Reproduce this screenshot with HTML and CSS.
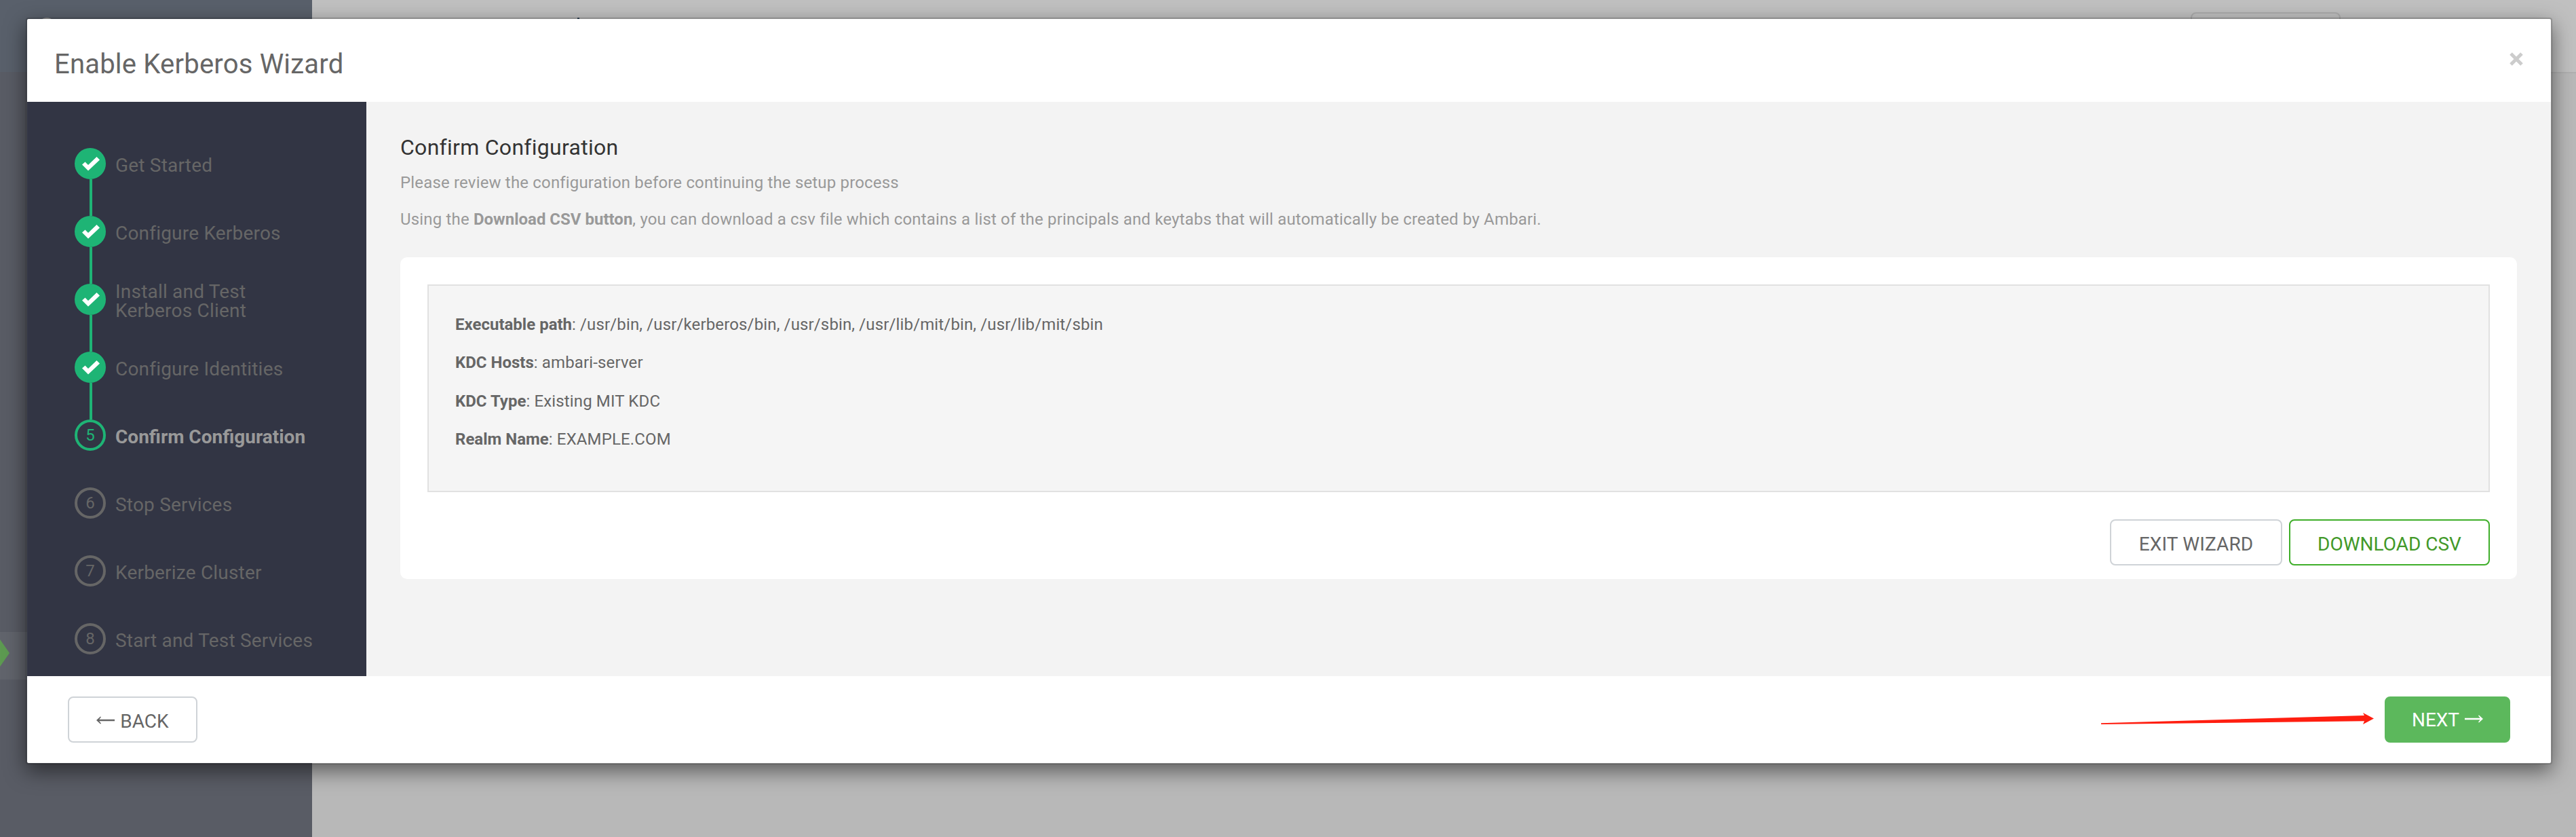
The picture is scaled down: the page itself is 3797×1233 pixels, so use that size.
FILE: index.html
```html
<!DOCTYPE html>
<html lang="en">
<head>
<meta charset="utf-8">
<title>Enable Kerberos Wizard</title>
<link rel="stylesheet" href="styles.css">
</head>
<body>
<div class="app">
  <aside class="app-nav">
    <div class="app-brand"><span class="app-logo"></span></div>
    <div class="app-nav-active"><span class="app-marker"></span></div>
  </aside>
  <main class="app-main">
    <div class="app-bar"><span class="app-crumb"></span><span class="app-bar-button"></span></div>
  </main>
</div>
<section class="modal">
  <header class="modal-header">
    <h1 class="modal-title">Enable Kerberos Wizard</h1>
    <button class="close" aria-label="Close"><svg width="20" height="20" viewBox="0 0 20 20"><path d="M2 2 18 18M18 2 2 18" stroke="#ccc" stroke-width="5"/></svg></button>
  </header>
  <div class="modal-body">
    <ol class="steps">
      <li class="step done"><span class="dot"><svg class="check" viewBox="0 0 26 20"><path d="M0 11.5 4.5 7.5 9 12 21.5 0 26 4.5 9 20.5Z"/></svg></span><span class="label">Get Started</span></li>
      <li class="step done"><span class="dot"><svg class="check" viewBox="0 0 26 20"><path d="M0 11.5 4.5 7.5 9 12 21.5 0 26 4.5 9 20.5Z"/></svg></span><span class="label">Configure Kerberos</span></li>
      <li class="step done"><span class="dot"><svg class="check" viewBox="0 0 26 20"><path d="M0 11.5 4.5 7.5 9 12 21.5 0 26 4.5 9 20.5Z"/></svg></span><span class="label two-line">Install and Test Kerberos Client</span></li>
      <li class="step done"><span class="dot"><svg class="check" viewBox="0 0 26 20"><path d="M0 11.5 4.5 7.5 9 12 21.5 0 26 4.5 9 20.5Z"/></svg></span><span class="label">Configure Identities</span></li>
      <li class="step active"><span class="dot">5</span><span class="label">Confirm Configuration</span></li>
      <li class="step"><span class="dot">6</span><span class="label">Stop Services</span></li>
      <li class="step"><span class="dot">7</span><span class="label">Kerberize Cluster</span></li>
      <li class="step"><span class="dot">8</span><span class="label">Start and Test Services</span></li>
    </ol>
    <div class="content">
      <h2 class="heading">Confirm Configuration</h2>
      <p class="intro">Please review the configuration before continuing the setup process</p>
      <p class="intro">Using the <b>Download CSV button</b>, you can download a csv file which contains a list of the principals and keytabs that will automatically be created by Ambari.</p>
      <div class="card">
        <div class="well">
          <p><b>Executable path</b>: /usr/bin, /usr/kerberos/bin, /usr/sbin, /usr/lib/mit/bin, /usr/lib/mit/sbin</p>
          <p><b>KDC Hosts</b>: ambari-server</p>
          <p><b>KDC Type</b>: Existing MIT KDC</p>
          <p><b>Realm Name</b>: EXAMPLE.COM</p>
        </div>
        <div class="actions">
          <button class="btn exit">EXIT WIZARD</button>
          <button class="btn download">DOWNLOAD CSV</button>
        </div>
      </div>
    </div>
  </div>
  <footer class="modal-footer">
    <button class="btn back"><svg class="arrow" width="27" height="12" viewBox="0 0 27 12"><path d="M0 6 6 0.5 7 1.2 4.3 4.7H27V7.3H4.3L7 10.8 6 11.5Z"/></svg>BACK</button>
    <button class="btn next">NEXT<svg class="arrow" width="27" height="12" viewBox="0 0 27 12"><path d="M27 6 21 0.5 20 1.2 22.7 4.7H0V7.3H22.7L20 10.8 21 11.5Z"/></svg></button>
  </footer>
</section>
<svg class="pointer" width="404" height="20" viewBox="0 0 404 20"><path d="M0 15.3 388 4 386 0 402 8.5 386 17 388 12.3 0 17Z"/></svg>
</body>
</html>
```

FILE: styles.css
```css
* { box-sizing: border-box; }
html, body { margin: 0; height: 1233px; overflow: hidden; }
body { position: relative; font-family: Roboto, sans-serif; font-size: 24px; color: #666; background: #b8b8b8; }
h1, h2, p, ol { margin: 0; padding: 0; font-weight: 400; }
b { letter-spacing: 0; }

/* Dimmed application behind the dialog */
.app { display: flex; height: 1233px; }
.app-nav { width: 460px; background: #595c65; }
.app-brand { height: 106px; padding: 26px 0 0 56px; background: #59606b; }
.app-logo { display: block; width: 26px; height: 26px; border-radius: 50%; background: #a0a0a0; }
.app-nav-active { height: 70px; margin-top: 825px; padding-top: 11px; background: #61646c; }
.app-marker { display: block; width: 14px; height: 40px; background: #5d9a51; clip-path: polygon(0 0, 100% 50%, 0 100%); }
.app-main { flex: 1; }
.app-bar { display: flex; justify-content: space-between; height: 108px; padding: 18px 347px 0 391px; background: #c0c0c0; border-bottom: 2px solid #b0b0b0; }
.app-crumb { width: 3px; height: 12px; margin-top: 8px; background: #34495e; }
.app-bar-button { width: 221px; height: 68px; border: 2px solid #acacac; border-radius: 8px; }

/* Dialog */
.modal { position: absolute; left: 38px; top: 26px; display: flex; flex-direction: column; width: 3724px; height: 1100px; border: 2px solid rgba(0,0,0,.2); border-radius: 4px; background: #fff; background-clip: padding-box; box-shadow: 0 10px 30px rgba(0,0,0,.5); }
.modal-header { display: flex; justify-content: space-between; height: 122px; padding: 43px 41px 0 40px; }
.modal-title { font-size: 40px; line-height: 48px; letter-spacing: .2px; }
.close { width: 20px; height: 20px; margin-top: 6px; padding: 0; border: 0; background: none; }
.close svg { display: block; }
.modal-body { display: flex; height: 846px; }
.modal-footer { display: flex; flex: 1; justify-content: space-between; align-items: flex-start; padding: 30px 60px 0; }

/* Step list */
.steps { width: 500px; padding: 68px 0 0 70px; list-style: none; background: #323544; }
.step { display: flex; height: 100px; font-size: 28px; line-height: 28px; }
.dot { display: flex; flex: none; align-items: center; justify-content: center; width: 46px; height: 46px; border: 4px solid #666; border-radius: 50%; font-size: 24px; }
.label { width: 310px; margin: 12px 0 0 14px; letter-spacing: .2px; }
.two-line { width: 220px; margin-top: -2px; }
.check { display: block; width: 26px; height: 20px; margin-left: 2px; overflow: visible; fill: #fff; }
.done { background: linear-gradient(#1eb475, #1eb475) 22px 46px / 4px 54px no-repeat; }
.done .dot { border-color: #1eb475; background: #1eb475; }
.active .dot { border-color: #1eb475; color: #1eb475; }
.active .label { color: #999; font-weight: 700; letter-spacing: 0; }

/* Step content */
.content { flex: 1; padding: 46px 50px 0; background: #f3f3f3; }
.heading { margin-bottom: 14px; font-size: 32px; line-height: 42px; letter-spacing: .28px; color: #333; }
.intro { height: 54px; line-height: 34px; letter-spacing: .17px; color: #999; }
.card { height: 474px; margin-top: 19px; padding: 40px; border-radius: 10px; background: #fff; }
.well { height: 306px; padding: 40px 39px 0; border: 2px solid #e1e1e1; background: #f5f5f5; }
.well p { height: 56.3px; line-height: 34px; letter-spacing: .14px; }
.actions { display: flex; justify-content: flex-end; gap: 10px; margin-top: 40px; }

.btn { display: flex; align-items: center; justify-content: center; height: 68px; padding: 6px 0 0; border: 2px solid #cfd3d7; border-radius: 8px; background: #fff; color: #666; font: 28px/32px Roboto, sans-serif; }
.arrow { margin-top: -4px; fill: currentColor; }
.exit { width: 254px; letter-spacing: .15px; }
.download { width: 296px; border-color: #3fae2a; color: #429929; }
.back { width: 191px; gap: 8px; }
.next { width: 185px; gap: 8px; padding-top: 2px; border-color: #5cb85c; background: #5cb85c; color: #fff; }

/* Callout drawn over the footer */
.pointer { position: absolute; left: 3097px; top: 1050px; fill: #ff1e10; }
```
